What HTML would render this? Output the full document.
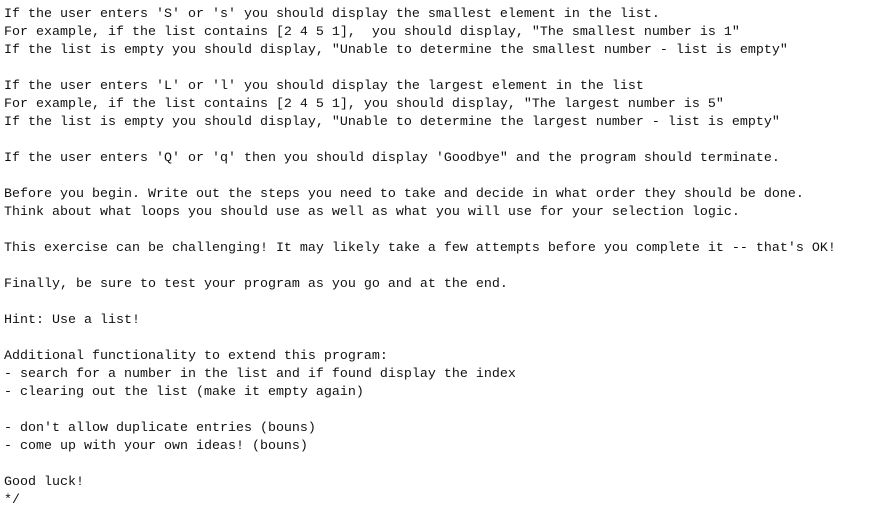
<!DOCTYPE html>
<html><head><meta charset="utf-8"><style>
html,body{margin:0;padding:0;background:#fff;width:878px;height:516px;overflow:hidden}
pre{margin:0;position:absolute;left:4px;top:6px;font-family:"Liberation Mono",monospace;font-size:13.33px;line-height:18px;color:#111}
</style></head><body><pre>If the user enters 'S' or 's' you should display the smallest element in the list.
For example, if the list contains [2 4 5 1],  you should display, "The smallest number is 1"
If the list is empty you should display, "Unable to determine the smallest number - list is empty"

If the user enters 'L' or 'l' you should display the largest element in the list
For example, if the list contains [2 4 5 1], you should display, "The largest number is 5"
If the list is empty you should display, "Unable to determine the largest number - list is empty"

If the user enters 'Q' or 'q' then you should display 'Goodbye" and the program should terminate.

Before you begin. Write out the steps you need to take and decide in what order they should be done.
Think about what loops you should use as well as what you will use for your selection logic.

This exercise can be challenging! It may likely take a few attempts before you complete it -- that's OK!

Finally, be sure to test your program as you go and at the end.

Hint: Use a list!

Additional functionality to extend this program:
- search for a number in the list and if found display the index
- clearing out the list (make it empty again)

- don't allow duplicate entries (bouns)
- come up with your own ideas! (bouns)

Good luck!
*/</pre></body></html>
